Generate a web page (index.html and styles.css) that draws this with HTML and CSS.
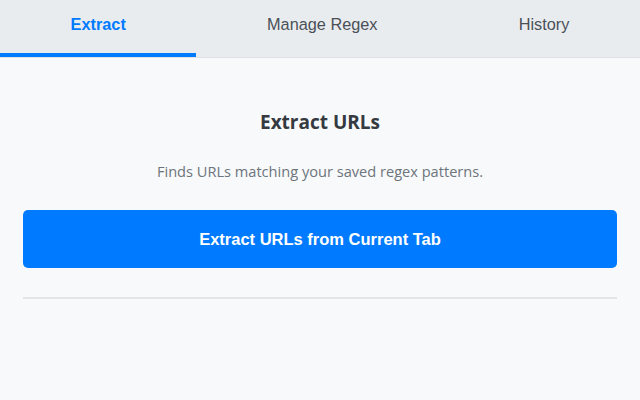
FILE: index.html
```html
<!DOCTYPE html>
<html>
<head>
<meta charset="utf-8">
<link rel="stylesheet" href="styles.css">
</head>
<body>
<nav class="tabs">
  <div class="tab active">Extract</div>
  <div class="tab">Manage Regex</div>
  <div class="tab">History</div>
</nav>
<main class="content">
  <h2 class="title">Extract URLs</h2>
  <p class="subtitle">Finds URLs matching your saved regex patterns.</p>
  <button class="extract-btn">Extract URLs from Current Tab</button>
  <hr class="divider">
</main>
</body>
</html>
```
FILE: styles.css
```css
html, body {
  margin: 0;
  padding: 0;
}
body {
  background: #f8f9fa;
  font-family: "Liberation Sans", Arial, sans-serif;
  width: 640px;
  height: 400px;
  overflow: hidden;
}
.tabs {
  display: flex;
  background: #e9ecef;
  border-bottom: 1px solid #dee2e6;
}
.tab {
  flex: 1 1 auto;
  text-align: center;
  font-size: 16.3px;
  color: #495057;
  height: 53px;
  line-height: 48px;
  border-bottom: 4px solid transparent;
}
.tab.active {
  color: #007bff;
  font-weight: bold;
  border-bottom-color: #007bff;
}
.content {
  padding: 0 23px;
  display: flex;
  flex-direction: column;
}
.title {
  margin: 50px 0 0;
  text-align: center;
  font-family: "Open Sans", sans-serif;
  font-weight: 700;
  font-size: 19px;
  line-height: 28px;
  color: #343a40;
}
.subtitle {
  margin: 24px 0 0;
  text-align: center;
  font-family: "Open Sans", sans-serif;
  font-size: 14.6px;
  line-height: 22px;
  color: #6c757d;
}
.extract-btn {
  margin-top: 28px;
  height: 58px;
  border: none;
  border-radius: 5px;
  background: #007bff;
  color: #fff;
  font-family: "Liberation Sans", Arial, sans-serif;
  font-weight: bold;
  font-size: 16.5px;
}
.divider {
  margin: 29px 0 0;
  border: none;
  border-top: 2px solid #e3e5e8;
}
```
